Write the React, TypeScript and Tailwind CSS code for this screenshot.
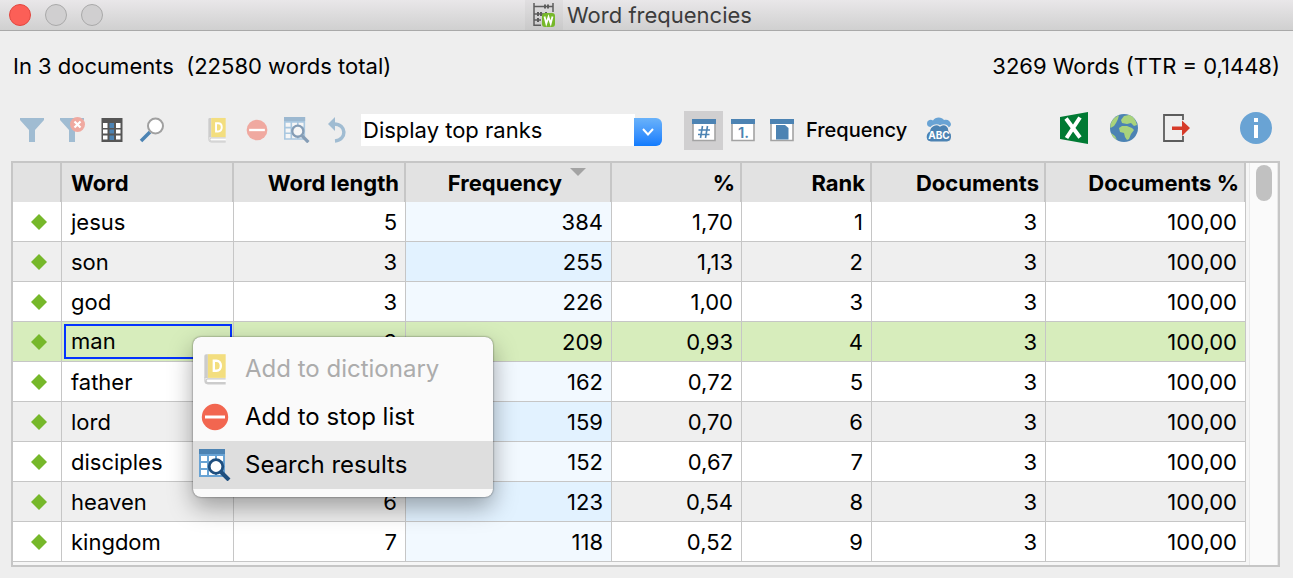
import type { ReactNode } from "react";

type Row = {
  word: string;
  length: number;
  frequency: number;
  percent: string;
  rank: number;
  documents: number;
};

const rows: Row[] = [
  { word: "jesus", length: 5, frequency: 384, percent: "1,70", rank: 1, documents: 3 },
  { word: "son", length: 3, frequency: 255, percent: "1,13", rank: 2, documents: 3 },
  { word: "god", length: 3, frequency: 226, percent: "1,00", rank: 3, documents: 3 },
  { word: "man", length: 3, frequency: 209, percent: "0,93", rank: 4, documents: 3 },
  { word: "father", length: 6, frequency: 162, percent: "0,72", rank: 5, documents: 3 },
  { word: "lord", length: 4, frequency: 159, percent: "0,70", rank: 6, documents: 3 },
  { word: "disciples", length: 9, frequency: 152, percent: "0,67", rank: 7, documents: 3 },
  { word: "heaven", length: 6, frequency: 123, percent: "0,54", rank: 8, documents: 3 },
  { word: "kingdom", length: 7, frequency: 118, percent: "0,52", rank: 9, documents: 3 },
];

const selectedWord = "man";

function TitleIcon() {
  return (
    <svg width="24" height="26" viewBox="0 0 24 26">
      <g stroke="#5c5c5c" strokeWidth="1.5" fill="none">
        <path d="M2 1v23M21 1v9M2 4.5h19M2 12h15M2 18h7M2 23.2h7" />
        <path d="M13 2.500v4M16 2.500v4M6 10v4M9 10v4M14 10v2M6 16v4" strokeWidth="2" />
      </g>
      <rect x="10" y="11" width="13" height="14" rx="3" fill="#76b82a" />
      <path d="M12.500 14.500l1.800 7 2.200-6.500 2.200 6.500 1.800-7" fill="none" stroke="#fff" strokeWidth="1.800" />
    </svg>
  );
}

function FilterIcon() {
  return (
    <svg width="26" height="26" viewBox="0 0 26 26">
      <path d="M1 1h24v2l-9 10v12h-6V13L1 3z" fill="#a0bcd2" />
    </svg>
  );
}

function FilterResetIcon() {
  return (
    <svg width="26" height="26" viewBox="0 0 26 26">
      <path d="M1 1h24v2l-9 10v12h-6V13L1 3z" fill="#a0bcd2" />
      <circle cx="18.500" cy="7.500" r="7.500" fill="#f0a9a0" />
      <path d="M15.500 4.500l6 6M21.500 4.500l-6 6" stroke="#fff" strokeWidth="2.200" />
    </svg>
  );
}

function ColumnsIcon() {
  return (
    <svg width="22" height="26" viewBox="0 0 22 26">
      <path d="M.5 1h21v24H.5z" fill="#555" />
      <path d="M2 6h4.500v5H2zM2 12.500h4.500v4H2zM2 18.500h4.500v4H2zM15 6h4.500v5H15zM15 12.500h4.500v4H15zM15 18.500h4.500v4H15z" fill="#fff" />
      <path d="M8.500 6H13v5H8.500zM8.500 12.500H13v4H8.500zM8.500 18.500H13v4.500H8.500z" fill="#4c83b3" />
    </svg>
  );
}

function MagnifierIcon() {
  return (
    <svg width="26" height="26" viewBox="0 0 26 26">
      <path d="M2 24l9-9" stroke="#4c83b3" strokeWidth="3.500" />
      <circle cx="16.500" cy="9" r="7.500" fill="#fff" stroke="#a0a0a0" strokeWidth="2" />
    </svg>
  );
}

function DictionaryIcon({ large }: { large?: boolean }) {
  return (
    <svg width={large ? 24 : 20} height={large ? 32 : 26} viewBox="0 0 20 27">
      <path d="M1 2.500Q1 1 2.500 1H4v20H1z" fill="#ccc" />
      <path d="M4 1h15v20H4z" fill="#f3de7f" />
      <path d="M19 22H4.500c-1.500 0-1.500 2.500 0 2.500H19" fill="#fff" />
      <path d="M19 21.800H4c-2 0-2 3.200 0 3.200h15M1.500 20.500v3Q1.500 26 4 26h15" fill="none" stroke="#ccc" />
      <path d="M9 6.500h2.200c5 0 5 8.500 0 8.500H9z" fill="none" stroke="#fff" strokeWidth="2" />
    </svg>
  );
}

function StopIcon({ large }: { large?: boolean }) {
  return (
    <svg width={large ? 28 : 22} height={large ? 28 : 22} viewBox="0 0 28 28">
      <circle cx="14" cy="14" r="13.200" fill={large ? "#f26650" : "#f0a9a0"} />
      <path d="M4 14h20" stroke="#fff" strokeWidth="3" />
    </svg>
  );
}

function SearchResultsIcon({ large }: { large?: boolean }) {
  return (
    <svg width={large ? 32 : 26} height={large ? 32 : 26} viewBox="0 0 32 32" className={large ? "" : "opacity-50"}>
      <path d="M0 0h26v28H0z" fill="#69a3d4" />
      <path d="M0 0h26v5H0z" fill="#4c83b3" />
      <path d="M2 7h6v5H2zM2 14h6v5H2zM2 21h6v5H2zM10 7h6v5h-6zM18 7h6v5h-6zM10 14h6v5h-6zM10 21h6v5h-6zM18 21h6v5h-6z" fill="#fff" />
      <path d="M22 23l8 8" stroke="#1f4f7f" strokeWidth="4" />
      <circle cx="17" cy="17.500" r="6.800" fill="#fff" stroke="#1f4f7f" strokeWidth="2.800" />
    </svg>
  );
}

function UndoIcon() {
  return (
    <svg width="18" height="26" viewBox="0 0 18 26">
      <path d="M7 0v14L0 7z" fill="#a0bcd2" />
      <path d="M6 7c13 0 13 16 1 17" fill="none" stroke="#a0bcd2" strokeWidth="3.500" />
    </svg>
  );
}

function PanelIcon({ children }: { children: ReactNode }) {
  return (
    <svg width="24" height="24" viewBox="0 0 24 24">
      <path d="M1 4h22v18.500H1z" fill="#fff" stroke="#a3a3a3" strokeWidth="1.600" />
      <path d="M0 1h24v5H0z" fill="#4c83b3" />
      {children}
    </svg>
  );
}

function WordCloudIcon() {
  return (
    <svg width="26" height="26" viewBox="0 0 26 26">
      <path d="M1 6.500C1 3 5 2 7 3.500 9-.5 16-.5 18 3c4-1 6 1 7 4 0 3-3 4-5 3H5C2 10 1 8.500 1 6.500z" fill="#69a3d4" />
      <path d="M5 25c-6 0-6.500-8-1.500-11C4 9 10 6 14 9c5-3 9 0 9 5 4 3 3.500 11-2 11z" fill="#4c83b3" stroke="#efefef" strokeWidth="1.200" />
      <text x="13" y="22" textAnchor="middle" fontSize="10" fontWeight="700" fill="#fff">
        ABC
      </text>
    </svg>
  );
}

function ExcelIcon() {
  return (
    <svg width="28" height="32" viewBox="0 0 28 32">
      <path d="M0 5l28-5v32L0 27z" fill="#007a33" />
      <path d="M6 6.500l14 19M20 5.500L6.500 26" stroke="#fff" strokeWidth="4" />
    </svg>
  );
}

function GlobeIcon() {
  return (
    <svg width="28" height="28" viewBox="0 0 28 28">
      <circle cx="14" cy="14" r="14" fill="#4c83b3" />
      <path d="M5 3.500L9 1l-1 4-2 4-2 3-3.500 2C0 10 2 6 5 3.500zM11 6l3-4 5-1c4 1 7 5 8 10l-3 1-3-3-4 1-5-1zM1 19l4 3 2 4-4-3z" fill="#a9d37c" />
      <path d="M9 14l3-2 5 0 5 2 2 2-3 4-2 5-2 1-2-3-1-4-4-1z" fill="#a9d37c" />
    </svg>
  );
}

function ExportIcon() {
  return (
    <svg width="28" height="28" viewBox="0 0 28 28">
      <path d="M20 6V1H1v26h19v-5" fill="none" stroke="#5c5c5c" strokeWidth="1.800" />
      <path d="M9 12.500h10V6.500L27 14l-8 8v-6H9z" fill="#d63a28" />
    </svg>
  );
}

function InfoIcon() {
  return (
    <svg width="32" height="32" viewBox="0 0 32 32">
      <circle cx="16" cy="16" r="16" fill="#69a3d4" />
      <path d="M14 6h4v4h-4zM14 13h4v13h-4z" fill="#fff" />
    </svg>
  );
}

function ToolButton({ label, children }: { label: string; children: ReactNode }) {
  return (
    <button type="button" aria-label={label} className="flex h-10 w-10 items-center justify-center">
      {children}
    </button>
  );
}

function TitleBar() {
  return (
    <header className="grid h-[31px] grid-cols-[1fr_auto_1fr] items-center border-b border-[#a9a9a9] bg-linear-to-b from-[#e9e7e9] to-[#d0d0d0]">
      <div className="flex gap-[14px] pl-[9px]">
        <button type="button" aria-label="Close" className="h-[22px] w-[22px] rounded-full border border-[#e2463f] bg-[#fc5f57]" />
        <button type="button" aria-label="Minimize" className="h-[22px] w-[22px] rounded-full border border-[#a9a9a9] bg-[#d0cfd0]" />
        <button type="button" aria-label="Zoom" className="h-[22px] w-[22px] rounded-full border border-[#a9a9a9] bg-[#d0cfd0]" />
      </div>
      <div className="flex h-[30px] items-center gap-1 pr-4">
        <span className="flex h-[30px] w-[38px] items-center justify-center bg-black/3">
          <TitleIcon />
        </span>
        <h1 className="text-[22px] leading-7 text-[#3c3c3c]">Word frequencies</h1>
      </div>
    </header>
  );
}

function Toolbar() {
  return (
    <div className="flex h-[50px] items-center pr-[17px] pl-3">
      <ToolButton label="Filter">
        <FilterIcon />
      </ToolButton>
      <ToolButton label="Reset filters">
        <FilterResetIcon />
      </ToolButton>
      <ToolButton label="Columns">
        <ColumnsIcon />
      </ToolButton>
      <ToolButton label="Search">
        <MagnifierIcon />
      </ToolButton>
      <div className="ml-[25px] flex">
        <ToolButton label="Add to dictionary">
          <DictionaryIcon />
        </ToolButton>
        <ToolButton label="Add to stop list">
          <StopIcon />
        </ToolButton>
        <ToolButton label="Search results">
          <SearchResultsIcon />
        </ToolButton>
        <ToolButton label="Undo">
          <UndoIcon />
        </ToolButton>
      </div>
      <div className="relative ml-1 w-[301px]">
        <select aria-label="Display" className="block h-8 w-[274px] appearance-none bg-white pl-[2px] text-[22px] leading-8">
          <option>Display top ranks</option>
        </select>
        <span className="pointer-events-none absolute top-1 right-0 flex h-7 w-7 items-center justify-center rounded-r-md bg-linear-to-b from-[#69b2fa] to-[#0f7bfd]">
          <svg width="12" height="8" viewBox="0 0 12 8">
            <path d="M1 1l5 5.500L11 1" fill="none" stroke="#fff" strokeWidth="2" />
          </svg>
        </span>
      </div>
      <div className="ml-[22px] flex">
        <button type="button" aria-label="Absolute" aria-pressed="true" className="flex h-[39px] w-[39px] items-center justify-center bg-[#d0cfd0]">
          <PanelIcon>
            <path d="M10.500 8l-2 12M15.500 8l-2 12M6.500 12h11.500M6 16.500h11.500" stroke="#4c83b3" strokeWidth="1.600" />
          </PanelIcon>
        </button>
        <button type="button" aria-label="Rank" className="flex h-[39px] w-[39px] items-center justify-center">
          <PanelIcon>
            <text x="12.500" y="20" textAnchor="middle" fontSize="15" fontWeight="600" fill="#4c83b3">
              1.
            </text>
          </PanelIcon>
        </button>
        <button type="button" aria-label="Document" className="flex h-[39px] w-[39px] items-center justify-center">
          <PanelIcon>
            <path d="M6 7h9l3.500 3v11.500H6z" fill="#4c83b3" />
          </PanelIcon>
        </button>
      </div>
      <span className="ml-[5px] text-[20px] leading-8 font-medium">Frequency</span>
      <div className="ml-3 flex">
        <ToolButton label="Word cloud">
          <WordCloudIcon />
        </ToolButton>
      </div>
      <div className="ml-auto flex items-center pb-1">
        <ToolButton label="Open as Excel table">
          <ExcelIcon />
        </ToolButton>
        <div className="mr-[13px] ml-[10px] flex">
          <ToolButton label="Open as HTML table">
            <GlobeIcon />
          </ToolButton>
        </div>
        <ToolButton label="Export">
          <ExportIcon />
        </ToolButton>
        <div className="ml-[39px] flex">
          <ToolButton label="Info">
            <InfoIcon />
          </ToolButton>
        </div>
      </div>
    </div>
  );
}

function FrequencyTable() {
  const head = "border-r-2 border-[#c6c6c6] pr-[5px]";
  return (
    <table className="min-w-0 flex-1 table-fixed border-separate border-spacing-0 text-[22px] leading-8">
      <colgroup>
        <col className="w-[49px]" />
        <col className="w-[172px]" />
        <col className="w-[172px]" />
        <col className="w-[206px]" />
        <col className="w-[130px]" />
        <col className="w-[130px]" />
        <col className="w-[174px]" />
        <col />
      </colgroup>
      <thead>
        <tr className="h-[39px] bg-[#e2e2e2] text-right font-bold">
          <th className={head} aria-label="Marker" />
          <th className={`${head} pl-[9px] text-left`}>Word</th>
          <th className={head}>Word length</th>
          <th className={head}>
            <div className="flex items-start justify-end pr-[19px]">
              <span>Frequency</span>
              <svg width="16" height="9" viewBox="0 0 16 9" className="ml-2">
                <path d="M0 1h16L8 9z" fill="#a3a3a3" />
              </svg>
            </div>
          </th>
          <th className={head}>%</th>
          <th className={head}>Rank</th>
          <th className={head}>Documents</th>
          <th className={head}>Documents %</th>
        </tr>
      </thead>
      <tbody>
        {rows.map((row, i) => {
          const selected = row.word === selectedWord;
          const odd = i % 2 === 1;
          const bg = selected ? "bg-[#d7edbc]" : odd ? "bg-[#efefef]" : "bg-white";
          const freqBg = selected ? "" : odd ? "bg-[#e2f2ff]" : "bg-[#f2f9ff]";
          const cell = "border-r border-b border-[#c6c6c6] px-2";
          return (
            <tr key={row.word} className={`h-10 text-right ${bg}`}>
              <td className={cell}>
                <svg width="16" height="16" viewBox="0 0 16 16" className="ml-auto mr-[6px]">
                  <path d="M8 0l8 8-8 8-8-8z" fill="#76b82a" />
                </svg>
              </td>
              <td className={`border-r border-b border-[#c6c6c6] text-left ${selected ? "p-[2px] pr-px" : "px-[9px]"}`}>
                {selected ? <div className="h-[35px] border-2 border-[#0433ff] pl-[5px] leading-[31px]">{row.word}</div> : row.word}
              </td>
              <td className={cell}>{row.length}</td>
              <td className={`${cell} ${freqBg}`}>{row.frequency}</td>
              <td className={cell}>{row.percent}</td>
              <td className={cell}>{row.rank}</td>
              <td className={cell}>{row.documents}</td>
              <td className={cell}>100,00</td>
            </tr>
          );
        })}
      </tbody>
    </table>
  );
}

function ContextMenu() {
  const item = "flex h-12 w-full items-center text-left text-[24px]";
  const icon = "flex w-11 justify-center";
  return (
    <div
      role="menu"
      className="absolute top-[174px] left-[180px] w-[300px] rounded-lg bg-[#fafafa] py-2 shadow-[0_0_2px_rgba(0,0,0,0.6),0_10px_24px_rgba(0,0,0,0.35)]"
    >
      <button type="button" role="menuitem" disabled className={`${item} text-[#acacac]`}>
        <span className={icon}>
          <DictionaryIcon large />
        </span>
        <span className="pl-2">Add to dictionary</span>
      </button>
      <button type="button" role="menuitem" className={item}>
        <span className={icon}>
          <StopIcon large />
        </span>
        <span className="pl-2">Add to stop list</span>
      </button>
      <button type="button" role="menuitem" className={`${item} bg-[#dedede]`}>
        <span className={icon}>
          <SearchResultsIcon large />
        </span>
        <span className="pl-2">Search results</span>
      </button>
    </div>
  );
}

export default function App() {
  return (
    <div className="min-h-screen bg-[#eeeeee] font-['Inter',sans-serif] text-black">
      <TitleBar />
      <div className="flex justify-between px-[13px] pt-[19px] pb-[23px] text-[22px] leading-8">
        <p className="whitespace-pre">In 3 documents  (22580 words total)</p>
        <p>3269 Words (TTR = 0,1448)</p>
      </div>
      <Toolbar />
      <main className="relative mt-[6px] mr-[13px] ml-[11px] flex border-2 border-[#c6c6c6] bg-[#f6f6f6]">
        <div className="flex min-w-0 flex-1 pb-[3px]">
          <FrequencyTable />
        </div>
        <div className="ml-[3px] flex w-[29px] justify-center border-x border-[#e8e8e8] bg-[#fafafa] pt-[2px]">
          <div className="h-9 w-4 rounded-full bg-[#c1c1c1]" />
        </div>
        <ContextMenu />
      </main>
    </div>
  );
}
